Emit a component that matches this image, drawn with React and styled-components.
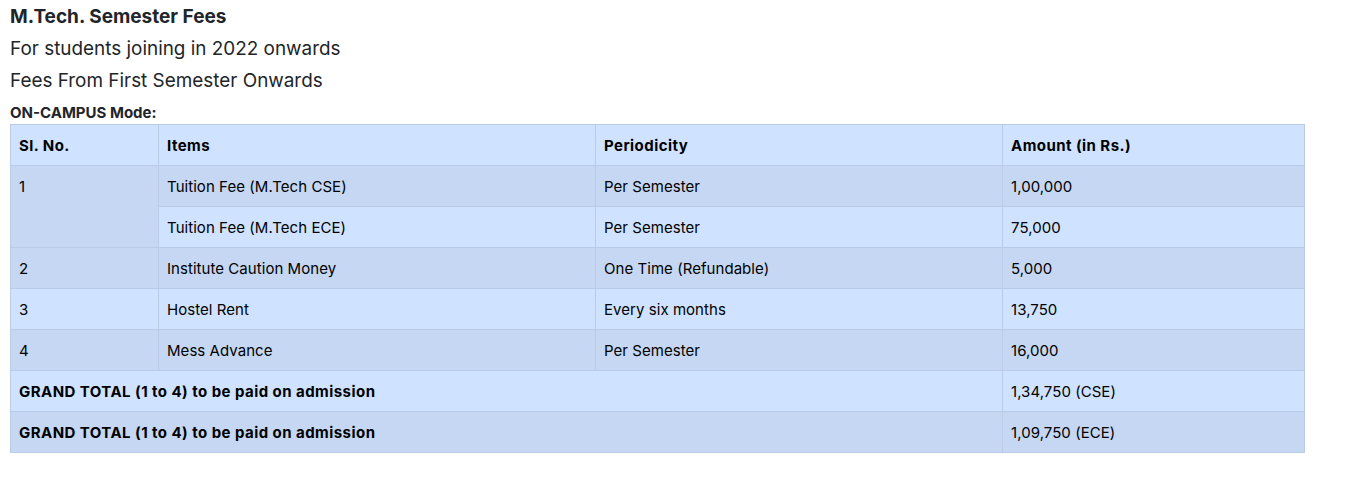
import React from 'react'
import styled, { createGlobalStyle } from 'styled-components'

const GlobalStyle = createGlobalStyle`
  body {
    margin: 0;
    background: #fff;
    color: #212529;
    font-family: Inter, "Liberation Sans", sans-serif;
  }
`

const Page = styled.div`
  padding: 5px 10px 0 10px;
`

const Title = styled.h5`
  margin: 0;
  font-size: 19px;
  font-weight: 700;
  line-height: 24px;
  height: 32px;
`

const SubTitle = styled.p`
  margin: 0;
  font-size: 18.9px;
  line-height: 24px;
  height: 32px;
`

const ModeLabel = styled.div`
  font-size: 15px;
  font-weight: 700;
  line-height: 23px;
`

const FeeTable = styled.table`
  width: 1295px;
  border-collapse: collapse;
  font-size: 15px;
  color: #000;
`

const Cell = styled.td`
  padding: 9px 8px 7px;
  height: 24px;
  line-height: 24px;
  text-align: left;
  vertical-align: top;
  border: 1px solid #bacbe6;
  background: ${(p) => (p.$dark ? '#c5d7f2' : '#cfe2ff')};
  font-weight: ${(p) => (p.$bold ? 700 : 400)};
  letter-spacing: ${(p) => (p.$bold ? '0.45px' : '0.05px')};
  width: ${(p) => p.$w || 'auto'};
`

const rows = [
  { no: '1', item: 'Tuition Fee (M.Tech CSE)', period: 'Per Semester', amount: '1,00,000', span: 2 },
  { item: 'Tuition Fee (M.Tech ECE)', period: 'Per Semester', amount: '75,000' },
  { no: '2', item: 'Institute Caution Money', period: 'One Time (Refundable)', amount: '5,000' },
  { no: '3', item: 'Hostel Rent', period: 'Every six months', amount: '13,750' },
  { no: '4', item: 'Mess Advance', period: 'Per Semester', amount: '16,000' },
]

const totals = ['1,34,750 (CSE)', '1,09,750 (ECE)']

function App() {
  return (
    <Page>
      <GlobalStyle />
      <Title>M.Tech. Semester Fees</Title>
      <SubTitle>For students joining in 2022 onwards</SubTitle>
      <SubTitle>Fees From First Semester Onwards</SubTitle>
      <ModeLabel>ON-CAMPUS Mode:</ModeLabel>
      <FeeTable>
        <thead>
          <tr>
            <Cell as="th" $bold $w="131px">Sl. No.</Cell>
            <Cell as="th" $bold $w="420px">Items</Cell>
            <Cell as="th" $bold $w="390px">Periodicity</Cell>
            <Cell as="th" $bold>Amount (in Rs.)</Cell>
          </tr>
        </thead>
        <tbody>
          {rows.map((r, i) => {
            const dark = i % 2 === 0
            return (
              <tr key={i}>
                {r.no && <Cell $dark={dark} rowSpan={r.span || 1}>{r.no}</Cell>}
                <Cell $dark={dark}>{r.item}</Cell>
                <Cell $dark={dark}>{r.period}</Cell>
                <Cell $dark={dark}>{r.amount}</Cell>
              </tr>
            )
          })}
          {totals.map((t, i) => (
            <tr key={t}>
              <Cell $dark={i === 1} $bold colSpan={3}>GRAND TOTAL (1 to 4) to be paid on admission</Cell>
              <Cell $dark={i === 1}>{t}</Cell>
            </tr>
          ))}
        </tbody>
      </FeeTable>
    </Page>
  )
}

export default App
